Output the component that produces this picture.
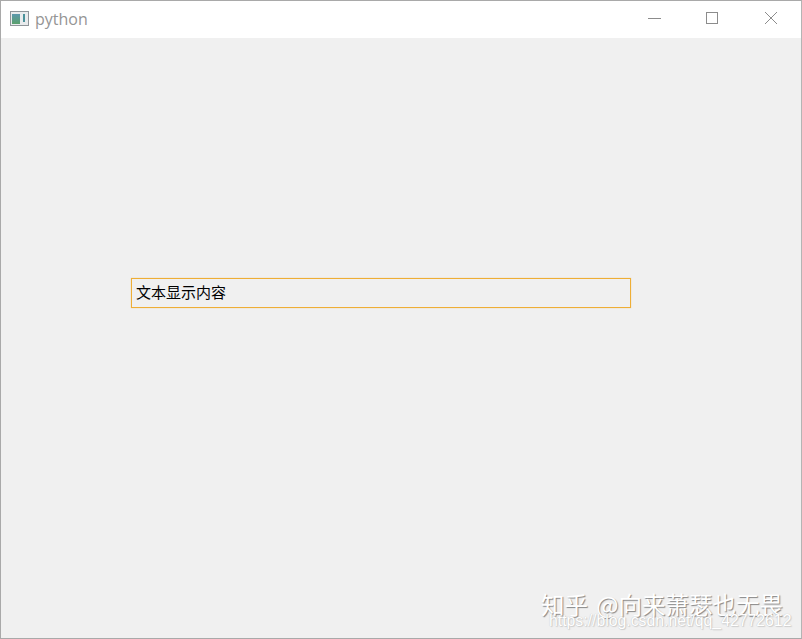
<style>
:global(body) { margin: 0; }
.window { position: relative; width: 802px; height: 639px; box-sizing: border-box; border: 1px solid #a9a9a9; border-right-color: #b4b4b4; display: flex; flex-direction: column; background: #f0f0f0; overflow: hidden; font-family: "Liberation Sans", "Noto Sans CJK SC", sans-serif; }
.titlebar { height: 37px; flex: none; background: #fff; display: flex; align-items: center; padding-left: 9px; padding-right: 1px; }
.app-icon { width: 20px; height: 16px; margin-right: 5px; margin-top: -2px; }
.title { font-family: "Open Sans", "Liberation Sans", sans-serif; font-size: 16px; color: #959595; margin-top: -1px; flex: 1; }
.controls { display: flex; align-self: stretch; }
.ctl { width: 58px; height: 37px; display: flex; align-items: center; justify-content: center; }
.ctl svg { width: 14px; height: 14px; margin-top: -3px; }
.content { flex: 1; padding: 240px 0 0 130px; }
.field { width: 500px; height: 30px; box-sizing: border-box; border: 1px solid #eeae36; box-shadow: 0 0 1px rgba(238,174,54,0.5); padding-left: 4px; padding-bottom: 3px; display: flex; align-items: center; font-family: "Noto Sans CJK SC", sans-serif; font-size: 15px; color: #000; }
.mark { position: absolute; left: 540px; top: 588px; font-family: "Noto Sans CJK SC", sans-serif; font-size: 23.5px; word-spacing: 3px; line-height: 30px; color: #fff; white-space: nowrap; text-shadow: 1px 1px 1px #858585; }
.url { position: absolute; left: 548px; top: 611px; font-family: "Liberation Sans", sans-serif; font-size: 15.8px; line-height: 18px; color: #fff; white-space: nowrap; text-shadow: 0 0 1px #b5b5b5, 1px 1px 1px rgba(150,150,150,0.35); }
</style>

<div class="window">
  <div class="titlebar">
    <svg class="app-icon" viewBox="0 0 20 16">
      <defs>
        <linearGradient id="g" x1="0" y1="0" x2="0" y2="1">
          <stop offset="0" stop-color="#5b97ad" />
          <stop offset="1" stop-color="#5aa06c" />
        </linearGradient>
      </defs>
      <rect x="0.5" y="0.5" width="18" height="14" fill="#e9ebed" stroke="#8f959a" />
      <rect x="2" y="3" width="8" height="10" fill="url(#g)" />
      <rect x="13" y="3" width="2" height="8" fill="#4b929b" />
    </svg>
    <span class="title">python</span>
    <div class="controls">
      <div class="ctl"><svg viewBox="0 0 14 14"><path d="M0 7.5H13" stroke="#8c8c8c" fill="none" /></svg></div>
      <div class="ctl"><svg viewBox="0 0 14 14"><rect x="0.5" y="1.5" width="11" height="11" stroke="#8c8c8c" fill="none" /></svg></div>
      <div class="ctl"><svg viewBox="0 0 14 14"><path d="M1 1L13 13M13 1L1 13" stroke="#8c8c8c" fill="none" /></svg></div>
    </div>
  </div>
  <div class="content">
    <div class="field">文本显示内容</div>
  </div>
  <div class="mark">知乎 @向来萧瑟也无畏</div>
  <div class="url">https://blog.csdn.net/qq_42772612</div>
</div>
